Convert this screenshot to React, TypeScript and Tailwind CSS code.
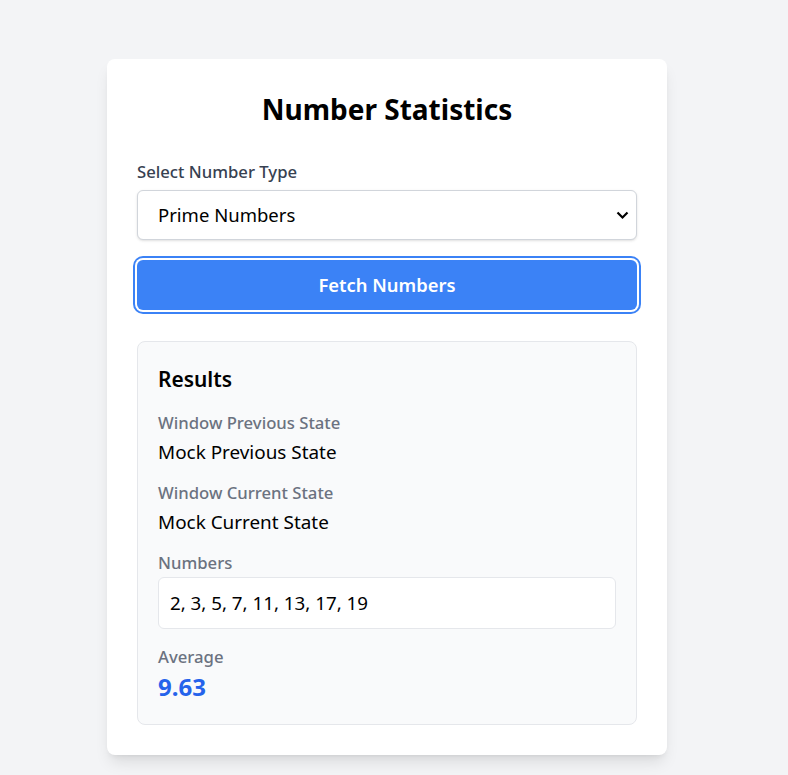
import React from "react";

export default function App() {
  return (
    <div
      className="min-h-screen w-full bg-[#f3f4f6] pt-[59px] pb-10"
      style={{ fontFamily: '"Noto Sans", "Open Sans", sans-serif' }}
    >
      <div className="ml-[107px] w-[560px] rounded-lg bg-white px-[30px] pt-[34px] pb-[30px] shadow-lg">
        <h1 className="text-center text-[28px] leading-8 font-bold text-black">Number Statistics</h1>
        <label className="mt-[34.5px] block text-[16.7px] leading-6 font-medium text-[#374151]">
          Select Number Type
        </label>
        <div className="relative mt-[6.5px]">
          <select
            defaultValue="prime"
            className="block h-[50px] w-full appearance-none rounded-md border border-[#d1d5db] bg-white px-5 text-[18.5px] text-black shadow-sm outline-none"
          >
            <option value="prime">Prime Numbers</option>
            <option value="fib">Fibonacci Numbers</option>
            <option value="even">Even Numbers</option>
            <option value="random">Random Numbers</option>
          </select>
          <svg
            className="pointer-events-none absolute top-[20px] right-[8px]"
            width="13"
            height="10"
            viewBox="0 0 13 10"
            fill="none"
          >
            <path d="M1.5 2.5 L6.5 7.5 L11.5 2.5" stroke="#000" strokeWidth="2.2" />
          </svg>
        </div>
        <button className="mt-5 block h-[50px] w-full rounded-md bg-[#3b82f6] text-[18.4px] font-semibold text-white ring-2 ring-[#3b82f6] ring-offset-2">
          Fetch Numbers
        </button>
        <div className="mt-[31px] rounded-lg border border-[#e5e7eb] bg-[#f9fafb] px-5 pt-[23px] pb-[21px]">
          <h2 className="text-[20.9px] leading-7 font-semibold text-black">Results</h2>
          <div className="mt-[17.5px]">
            <div className="text-[16.7px] leading-6 font-medium text-[#6b7280]">Window Previous State</div>
            <div className="mt-[3px] text-[18.9px] leading-7 text-black">Mock Previous State</div>
          </div>
          <div className="mt-[15px]">
            <div className="text-[16.7px] leading-6 font-medium text-[#6b7280]">Window Current State</div>
            <div className="mt-[3px] text-[18.9px] leading-7 text-black">Mock Current State</div>
          </div>
          <div className="mt-[15px]">
            <div className="text-[16.7px] leading-6 font-medium text-[#6b7280]">Numbers</div>
            <div className="mt-[2.5px] rounded-md border border-[#e5e7eb] bg-white px-[11px] py-[11px] text-[18.75px] leading-7 text-black">
              2, 3, 5, 7, 11, 13, 17, 19
            </div>
          </div>
          <div className="mt-[15.5px]">
            <div className="text-[16.7px] leading-6 font-medium text-[#6b7280]">Average</div>
            <div className="mt-[2.5px] text-2xl leading-8 font-bold text-[#2563eb]">9.63</div>
          </div>
        </div>
      </div>
    </div>
  );
}
